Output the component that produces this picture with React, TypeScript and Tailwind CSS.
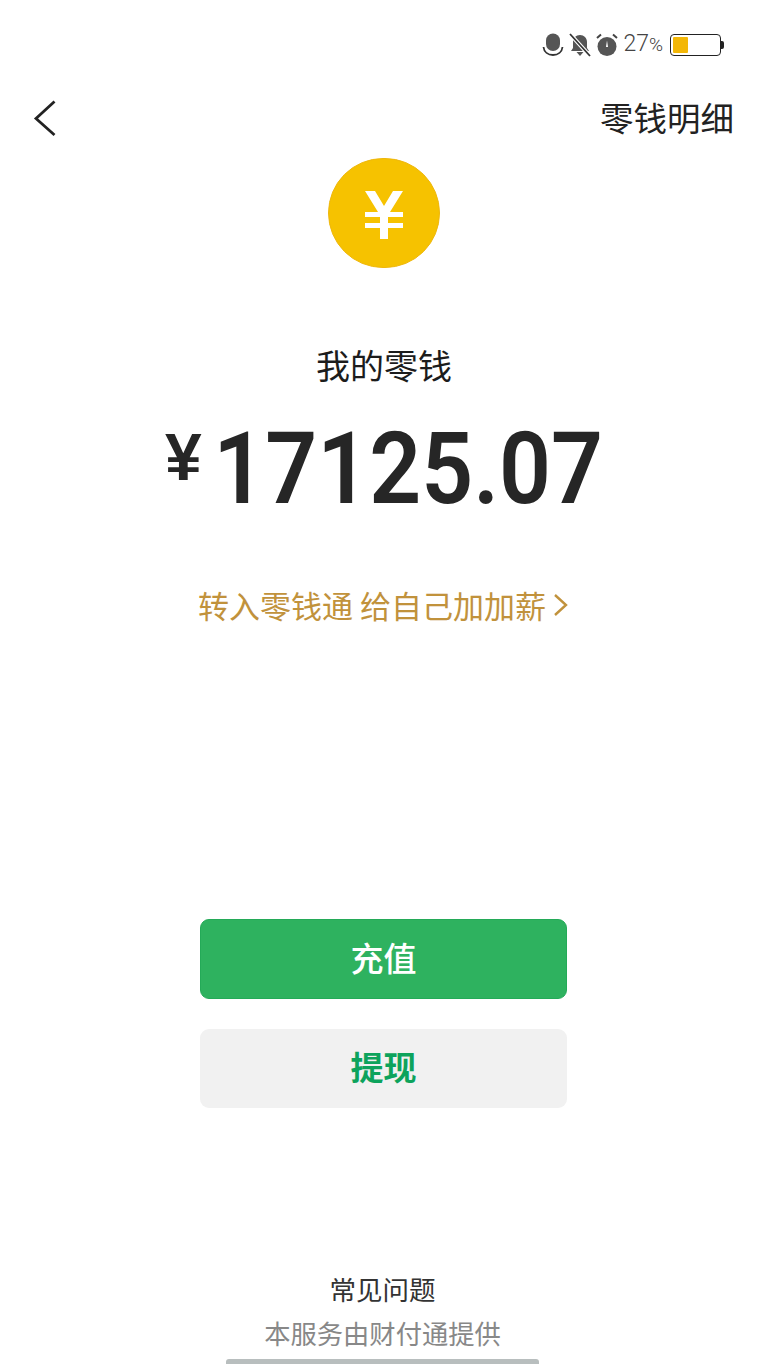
import React from "react";

const CJK = "font-['Noto_Sans_CJK_SC','Noto_Sans',sans-serif]";

function StatusBar() {
  return (
    <div className="flex h-[90px] items-center justify-end pb-[1px] pr-[44px] text-[#555555]">
      <div className="flex items-center">
        <svg width="22" height="24" viewBox="0 0 22 24" className="mr-[5px]">
          <rect x="4" y="0.5" width="14" height="17.5" rx="7" fill="#555" />
          <path d="M1.5 14c.5 5 4.5 8 9.5 8s9-3 9.5-8" fill="none" stroke="#333" strokeWidth="1.8" />
        </svg>
        <svg width="22" height="24" viewBox="0 0 22 24" className="mr-[4px]">
          <path d="M11 2c4 0 7 3 7 7v6l2 3H2l2-3V9c0-4 3-7 7-7z" fill="#555" />
          <path d="M7.5 19h7l-3.5 4z" fill="#555" />
          <path d="M1 1l20 22" stroke="#fff" strokeWidth="4" />
          <path d="M1 1l20 22" stroke="#333" strokeWidth="1.8" />
        </svg>
        <svg width="24" height="24" viewBox="0 0 24 24" className="mr-[4px]">
          <circle cx="12" cy="13.5" r="9.5" fill="#555" />
          <path d="M12 7.5l1 6.5h-2z" fill="#fff" />
          <path d="M2 5l4-3.5M22 5l-4-3.5" stroke="#444" strokeWidth="2" />
        </svg>
        <span className="mr-[7px] font-['Roboto',sans-serif] text-[23px] font-light leading-[24px] text-[#444]">
          27<span className="text-[19px]">%</span>
        </span>
        <div className="flex items-center">
          <div className="h-[22px] w-[51px] rounded-[4px] border-[1.5px] border-[#222] bg-white p-[2px]">
            <div className="h-full w-[15px] rounded-[1px] bg-[#f3b707]" />
          </div>
          <div className="h-[8px] w-[3px] rounded-r-[2px] bg-[#222]" />
        </div>
      </div>
    </div>
  );
}

function NavBar() {
  return (
    <div className="flex h-[56px] items-center justify-between pl-[33px] pr-[34px]">
      <svg width="24" height="38" viewBox="0 0 24 38" fill="none">
        <path d="M21.5 2.5 3 19.5 21.5 36" stroke="#222" strokeWidth="2.8" />
      </svg>
      <span className={`${CJK} mt-[-2px] text-[33.5px] leading-[40px] text-[#222]`}>零钱明细</span>
    </div>
  );
}

function Coin() {
  return (
    <div className="mt-[12px] flex justify-center">
      <div className="flex h-[110px] w-[112px] items-center justify-center rounded-full border border-[#efb70c] bg-[#f6c200]">
        <svg width="42" height="50" viewBox="0 0 42 50" className="mt-[3px]">
          <path d="M2 1h10L21 16 30 1h10L27 22h13v5H25v6h15v5H25v11h-8V38H2v-5h15v-6H2v-5h13z" fill="#fff" />
        </svg>
      </div>
    </div>
  );
}

function Balance() {
  return (
    <div className="mt-[66px] flex flex-col items-center">
      <div className={`${CJK} text-[34px] leading-[62px] text-[#1c1c1c]`}>我的零钱</div>
      <div className="mt-[25px] flex h-[100px] items-start pl-[20px] pr-[1px] font-['Roboto',sans-serif] font-semibold text-[#262626]">
        <span className="mt-[-4px] font-['Liberation_Sans',sans-serif] text-[66px] font-bold leading-[80px]">¥</span>
        <span className="ml-[-8px] mt-[-12px] scale-x-[0.91] text-[100px] leading-[120px]">17125.07</span>
      </div>
      <div className={`${CJK} mt-[64px] flex items-center text-[31px] leading-[40px] text-[#c1923c]`}>
        <span>转入零钱通 给自己加加薪</span>
        <svg width="18" height="26" viewBox="0 0 18 26" fill="none" className="ml-[6px]">
          <path d="M3 3l11 10L3 23" stroke="#c1923c" strokeWidth="2.4" />
        </svg>
      </div>
    </div>
  );
}

function Buttons() {
  return (
    <div className="mt-[294px] flex flex-col items-center gap-[30px] pr-[1px]">
      <div className={`${CJK} flex h-[80px] w-[367px] items-center justify-center rounded-[9px] border border-[#24aa58] bg-[#2eb25f] pb-[2px] text-[33px] font-medium text-white`}>
        充值
      </div>
      <div className={`${CJK} flex h-[79px] w-[367px] items-center justify-center rounded-[9px] bg-[#f1f1f1] pb-[4px] text-[33px] font-bold text-[#0da35c]`}>
        提现
      </div>
    </div>
  );
}

function Footer() {
  return (
    <div className={`${CJK} mt-[161px] flex flex-col items-center pr-[3px]`}>
      <div className="text-[26.5px] leading-[40px] text-[#333333]">常见问题</div>
      <div className="mt-[4px] text-[26.3px] leading-[40px] text-[#888888]">本服务由财付通提供</div>
      <div className="mt-[6px] h-[5px] w-[313px] rounded-t-[3px] bg-[#b8bebe]" />
    </div>
  );
}

export default function App() {
  return (
    <div className="h-[1365px] w-[768px] overflow-hidden bg-white">
      <StatusBar />
      <NavBar />
      <Coin />
      <Balance />
      <Buttons />
      <Footer />
    </div>
  );
}
